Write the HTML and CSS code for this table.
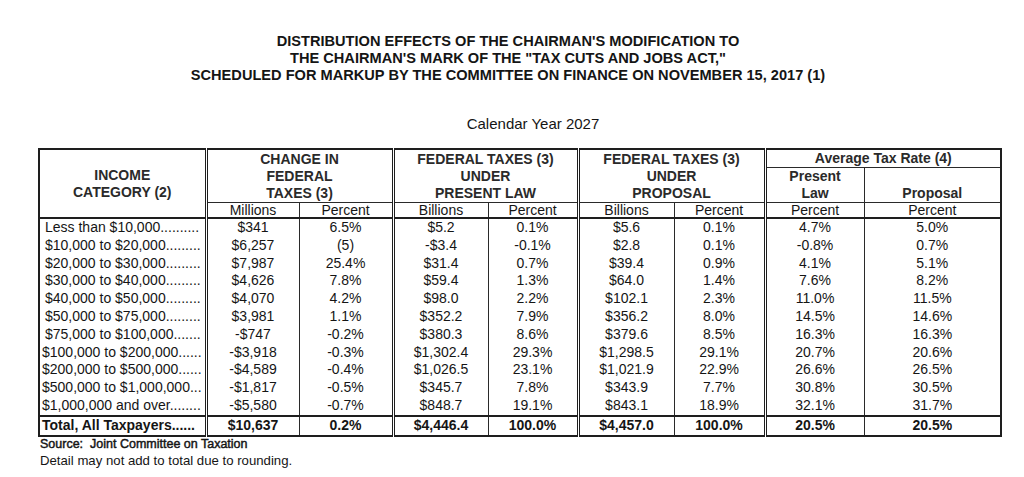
FILE: index.html
```html
<!DOCTYPE html>
<html>
<head>
<meta charset="utf-8">
<link rel="stylesheet" href="styles.css">
</head>
<body>
<div class="page">
  <div class="title">
    <div>DISTRIBUTION EFFECTS OF THE CHAIRMAN'S MODIFICATION TO</div>
    <div>THE CHAIRMAN'S MARK OF THE "TAX CUTS AND JOBS ACT,"</div>
    <div>SCHEDULED FOR MARKUP BY THE COMMITTEE ON FINANCE ON NOVEMBER 15, 2017 (1)</div>
  </div>
  <div class="year">Calendar Year 2027</div>
  <table class="dist">
    <colgroup>
      <col class="c-cat"><col class="c-m"><col class="c-p"><col class="c-b1"><col class="c-p1"><col class="c-b2"><col class="c-p2"><col class="c-r1"><col class="c-r2">
    </colgroup>
    <thead>
      <tr class="h1">
        <th rowspan="3" class="cat-h">INCOME<br>CATEGORY (2)</th>
        <th colspan="2" rowspan="2" class="g">CHANGE IN<br>FEDERAL<br>TAXES (3)</th>
        <th colspan="2" rowspan="2" class="g">FEDERAL TAXES (3)<br>UNDER<br>PRESENT LAW</th>
        <th colspan="2" rowspan="2" class="g">FEDERAL TAXES (3)<br>UNDER<br>PROPOSAL</th>
        <th colspan="2" class="g avg">Average Tax Rate (4)</th>
      </tr>
      <tr class="h2">
        <th class="g">Present<br>Law</th>
        <th class="s bottom">Proposal</th>
      </tr>
      <tr class="h3">
        <th class="g">Millions</th><th class="s">Percent</th>
        <th class="g">Billions</th><th class="s">Percent</th>
        <th class="g">Billions</th><th class="s">Percent</th>
        <th class="g">Percent</th><th class="s">Percent</th>
      </tr>
    </thead>
    <tbody>
      <tr><td class="lbl ind">Less than $10,000..........</td><td class="g">$341</td><td class="s">6.5%</td><td class="g">$5.2</td><td class="s">0.1%</td><td class="g">$5.6</td><td class="s">0.1%</td><td class="g">4.7%</td><td class="s">5.0%</td></tr>
      <tr><td class="lbl ind">$10,000 to $20,000.........</td><td class="g">$6,257</td><td class="s">(5)</td><td class="g">-$3.4</td><td class="s">-0.1%</td><td class="g">$2.8</td><td class="s">0.1%</td><td class="g">-0.8%</td><td class="s">0.7%</td></tr>
      <tr><td class="lbl ind">$20,000 to $30,000.........</td><td class="g">$7,987</td><td class="s">25.4%</td><td class="g">$31.4</td><td class="s">0.7%</td><td class="g">$39.4</td><td class="s">0.9%</td><td class="g">4.1%</td><td class="s">5.1%</td></tr>
      <tr><td class="lbl ind">$30,000 to $40,000.........</td><td class="g">$4,626</td><td class="s">7.8%</td><td class="g">$59.4</td><td class="s">1.3%</td><td class="g">$64.0</td><td class="s">1.4%</td><td class="g">7.6%</td><td class="s">8.2%</td></tr>
      <tr><td class="lbl ind">$40,000 to $50,000.........</td><td class="g">$4,070</td><td class="s">4.2%</td><td class="g">$98.0</td><td class="s">2.2%</td><td class="g">$102.1</td><td class="s">2.3%</td><td class="g">11.0%</td><td class="s">11.5%</td></tr>
      <tr><td class="lbl ind">$50,000 to $75,000.........</td><td class="g">$3,981</td><td class="s">1.1%</td><td class="g">$352.2</td><td class="s">7.9%</td><td class="g">$356.2</td><td class="s">8.0%</td><td class="g">14.5%</td><td class="s">14.6%</td></tr>
      <tr><td class="lbl ind">$75,000 to $100,000.......</td><td class="g">-$747</td><td class="s">-0.2%</td><td class="g">$380.3</td><td class="s">8.6%</td><td class="g">$379.6</td><td class="s">8.5%</td><td class="g">16.3%</td><td class="s">16.3%</td></tr>
      <tr><td class="lbl">$100,000 to $200,000......</td><td class="g">-$3,918</td><td class="s">-0.3%</td><td class="g">$1,302.4</td><td class="s">29.3%</td><td class="g">$1,298.5</td><td class="s">29.1%</td><td class="g">20.7%</td><td class="s">20.6%</td></tr>
      <tr><td class="lbl">$200,000 to $500,000......</td><td class="g">-$4,589</td><td class="s">-0.4%</td><td class="g">$1,026.5</td><td class="s">23.1%</td><td class="g">$1,021.9</td><td class="s">22.9%</td><td class="g">26.6%</td><td class="s">26.5%</td></tr>
      <tr><td class="lbl">$500,000 to $1,000,000...</td><td class="g">-$1,817</td><td class="s">-0.5%</td><td class="g">$345.7</td><td class="s">7.8%</td><td class="g">$343.9</td><td class="s">7.7%</td><td class="g">30.8%</td><td class="s">30.5%</td></tr>
      <tr><td class="lbl">$1,000,000 and over........</td><td class="g">-$5,580</td><td class="s">-0.7%</td><td class="g">$848.7</td><td class="s">19.1%</td><td class="g">$843.1</td><td class="s">18.9%</td><td class="g">32.1%</td><td class="s">31.7%</td></tr>
      <tr class="total"><td class="lbl">Total, All Taxpayers......</td><td class="g">$10,637</td><td class="s">0.2%</td><td class="g">$4,446.4</td><td class="s">100.0%</td><td class="g">$4,457.0</td><td class="s">100.0%</td><td class="g">20.5%</td><td class="s">20.5%</td></tr>
    </tbody>
  </table>
  <div class="source">Source:&nbsp; Joint Committee on Taxation</div>
  <div class="note">Detail may not add to total due to rounding.</div>
</div>
</body>
</html>
```

FILE: styles.css
```css
html, body {
  margin: 0;
  padding: 0;
  background: #fff;
}
body {
  font-family: "Liberation Sans", Arial, sans-serif;
  color: #151515;
}
.page {
  width: 1024px;
  padding-top: 33px;
}
.title {
  width: 1016px;
  text-align: center;
  font-weight: bold;
  font-size: 14.6px;
  line-height: 17px;
}
.year {
  width: 1016px;
  padding-left: 50px;
  box-sizing: border-box;
  text-align: center;
  font-size: 15px;
  line-height: 17px;
  margin-top: 31px;
}
.dist {
  margin-top: 16px;
  margin-left: 38px;
  width: 962px;
  table-layout: fixed;
  border-collapse: collapse;
  border: 2px solid #1e1e1e;
  font-size: 14px;
}
.c-cat { width: 167px; }
.c-m { width: 93px; }
.c-p { width: 94px; }
.c-b1 { width: 95px; }
.c-p1 { width: 90px; }
.c-b2 { width: 96px; }
.c-p2 { width: 91px; }
.c-r1 { width: 99px; }
.c-r2 { width: 137px; }
.dist th, .dist td {
  padding: 0;
  text-align: center;
  font-weight: normal;
  white-space: nowrap;
  overflow: hidden;
}
.dist thead th {
  line-height: 17px;
  vertical-align: middle;
}
.h1 th, .h2 th, .cat-h {
  font-weight: bold;
  color: #2a2a2a;
}
.dist .g { border-left: 3px double #1e1e1e; }
.dist .s { border-left: 1px solid #2a2a2a; }
.h1 th { height: 17px; }
.h2 th { height: 33px; }
.avg { border-bottom: 1px solid #2a2a2a; }
.dist .bottom { vertical-align: bottom; }
.cat-h { border-bottom: 2px solid #1e1e1e; }
.dist .h3 th {
  height: 14px;
  line-height: 14px;
  border-top: 1px solid #2a2a2a;
  border-bottom: 2px solid #1e1e1e;
}
.dist td {
  height: 17.8px;
  line-height: 17.8px;
}
.dist td.lbl {
  text-align: left;
  padding-left: 2px;
}
.dist td.ind { padding-left: 5px; }
.total td {
  font-weight: bold;
  border-top: 2px solid #1e1e1e;
}
.source {
  margin-left: 40px;
  font-size: 12.5px;
  -webkit-text-stroke: 0.45px #151515;
  line-height: 14px;
  margin-top: 0;
}
.note {
  margin-left: 40px;
  margin-top: 2px;
  font-size: 13.2px;
  line-height: 16px;
}
```
